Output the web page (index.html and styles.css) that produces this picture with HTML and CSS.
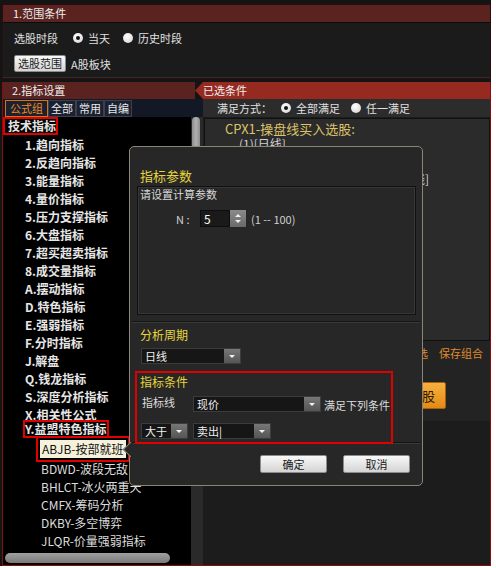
FILE: index.html
```html
<!DOCTYPE html>
<html>
    <head>
        <meta charset="UTF-8">
        <title>条件选股</title>
        <link rel="stylesheet" href="styles.css">
    </head>
    <body>
        <div class="app">

            <!-- 1. range -->
            <div class="range">
                <div class="range-head">1.范围条件</div>
                <div class="range-body">
                    <div class="row">
                        <span class="label">选股时段</span>
                        <span class="radio on"></span><span class="radio-text">当天</span>
                        <span class="radio"></span><span class="radio-text">历史时段</span>
                    </div>
                    <div class="row row-2">
                        <button class="btn-light">选股范围</button>
                        <span class="scope">A股板块</span>
                    </div>
                </div>
            </div>

            <!-- 2. index settings -->
            <div class="index">
                <div class="index-head">
                    <div class="head-l">2.指标设置</div>
                    <div class="head-r">已选条件</div>
                </div>
                <div class="main">
                    <div class="left">
                        <div class="tabs">
                            <span class="tab active">公式组</span>
                            <span class="tab">全部</span>
                            <span class="tab">常用</span>
                            <span class="tab">自编</span>
                        </div>
                        <div class="tree-wrap">
                            <div class="tree">
                                <div class="tree-list">
                                    <div class="t-row t-root"><span class="mark">技术指标</span></div>
                                    <div class="t-row t-item">1.趋向指标</div>
                                    <div class="t-row t-item">2.反趋向指标</div>
                                    <div class="t-row t-item">3.能量指标</div>
                                    <div class="t-row t-item">4.量价指标</div>
                                    <div class="t-row t-item">5.压力支撑指标</div>
                                    <div class="t-row t-item">6.大盘指标</div>
                                    <div class="t-row t-item">7.超买超卖指标</div>
                                    <div class="t-row t-item">8.成交量指标</div>
                                    <div class="t-row t-item">A.摆动指标</div>
                                    <div class="t-row t-item">D.特色指标</div>
                                    <div class="t-row t-item">E.强弱指标</div>
                                    <div class="t-row t-item">F.分时指标</div>
                                    <div class="t-row t-item">J.解盘</div>
                                    <div class="t-row t-item">Q.钱龙指标</div>
                                    <div class="t-row t-item">S.深度分析指标</div>
                                    <div class="t-row t-item">X.相关性公式</div>
                                    <div class="t-row t-item"><span class="mark mark-y">Y.益盟特色指标</span></div>
                                    <div class="t-row t-sub"><span class="picked">ABJB-按部就班</span></div>
                                    <div class="t-row t-sub">BDWD-波段无敌</div>
                                    <div class="t-row t-sub">BHLCT-冰火两重天</div>
                                    <div class="t-row t-sub">CMFX-筹码分析</div>
                                    <div class="t-row t-sub">DKBY-多空博弈</div>
                                    <div class="t-row t-sub">JLQR-价量强弱指标</div>
                                    <div class="t-row t-sub">TQR-价强弱指标</div>
                                </div>
                                <div class="hscroll"><span class="hthumb"></span></div>
                            </div>
                            <div class="vscroll"><span class="vthumb"></span></div>
                        </div>
                    </div>

                    <div class="right">
                        <div class="mode">
                            <span class="mode-label">满足方式：</span>
                            <span class="radio on"></span><span class="radio-text">全部满足</span>
                            <span class="radio"></span><span class="radio-text">任一满足</span>
                        </div>
                        <div class="cond-box">
                            <div class="cond-name">CPX1-操盘线买入选股:</div>
                            <div class="cond-line">(1)[日线]</div>
                            <div class="cond-line cond-line-3">(2)现价大于卖出[日线]</div>
                        </div>
                        <div class="actions">
                            <div class="links"><span>删除所选</span><span>保存组合</span></div>
                            <button class="btn-run">执行选股</button>
                        </div>
                    </div>
                </div>
            </div>

            <!-- popup dialog -->
            <div class="dlg">
                <div class="dlg-title dlg-main">指标参数</div>
                <div class="param">
                    <div class="param-hint">请设置计算参数</div>
                    <div class="param-row">
                        <span class="param-n">N :</span>
                        <span class="num">5</span>
                        <span class="spin"><i class="up"></i><i class="down"></i></span>
                        <span class="range-txt">(1 -- 100)</span>
                    </div>
                </div>
                <div class="sep"></div>
                <div class="dlg-title dlg-sub">分析周期</div>
                <div class="dd dd-period"><span class="dd-text">日线</span><span class="dd-btn"></span></div>
                <div class="cond">
                    <div class="dlg-title cond-title">指标条件</div>
                    <div class="cond-row1">
                        <span class="cond-label">指标线</span>
                        <div class="dd dd-line"><span class="dd-text">现价</span><span class="dd-btn"></span></div>
                        <span class="cond-tail">满足下列条件</span>
                    </div>
                    <div class="cond-row2">
                        <div class="dd dd-op"><span class="dd-text">大于</span><span class="dd-btn"></span></div>
                        <div class="dd dd-sig"><span class="dd-text">卖出|</span><span class="dd-btn"></span></div>
                    </div>
                </div>
                <div class="sep sep-2"></div>
                <div class="dlg-foot">
                    <button class="btn-light btn-dlg">确定</button>
                    <button class="btn-light btn-dlg">取消</button>
                </div>
            </div>

        </div>
    </body>
</html>
```

FILE: styles.css
```css
* {
    box-sizing: border-box;
}

body {
    margin: 0;
    background-color: #ffffff;
    color: #e0e0e0;
    font-family: "Noto Sans CJK SC", sans-serif;
    font-size: 11px;
}

.app {
    position: relative;
    width: 491px;
    height: 566px;
    padding-left: 2px;
    display: flex;
    flex-direction: column;
    background-color: #141414;
}

/* ---------- section 1 ---------- */
.range {
    margin-top: 4px;
    border: 1px solid #2c0c0c;
}

.range-head {
    height: 17px;
    line-height: 17px;
    padding-left: 10px;
    background-color: #5a2320;
    color: #eeeeee;
}

.range-body {
    height: 56px;
    padding: 7px 0 0 11px;
    background-color: #1b1b1b;
    border-top: 1px solid #0c0c0c;
    border-bottom: 1px solid #2e2e2e;
}

.row {
    display: flex;
    align-items: center;
    height: 16px;
}

.row-2 {
    margin-top: 9px;
    height: 17px;
}

.label {
    margin-right: 15px;
}

.radio {
    width: 10px;
    height: 10px;
    border-radius: 50%;
    background: radial-gradient(circle at 40% 35%, #ffffff, #cfcfcf);
    display: inline-flex;
    align-items: center;
    justify-content: center;
}

.radio.on::after {
    content: "";
    width: 4px;
    height: 4px;
    border-radius: 50%;
    background-color: #111111;
}

.radio-text {
    margin: 0 13px 0 5px;
}

.btn-light {
    height: 17px;
    padding: 0 3px;
    border: 1px solid #8c8c8c;
    border-radius: 2px;
    background: linear-gradient(#f8f8f8, #d4d4d4);
    color: #1a1a1a;
    font-family: inherit;
    font-size: 11px;
    line-height: 15px;
}

.scope {
    margin-left: 5px;
}

/* ---------- section 2 ---------- */
.index {
    flex: 1;
    min-height: 0;
    margin-top: 3px;
    display: flex;
    flex-direction: column;
    border: 1px solid #8a0c0c;
    border-top: none;
    overflow: hidden;
}

.index-head {
    height: 17px;
    line-height: 17px;
    display: flex;
    color: #eeeeee;
}

.head-l {
    width: 192px;
    padding-left: 9px;
    background-color: #5a2320;
}

.head-r {
    flex: 1;
    padding-left: 8px;
    background-color: #962a21;
    clip-path: polygon(8px 0, 100% 0, 100% 100%, 8px 100%, 0 50%);
}

.main {
    flex: 1;
    min-height: 0;
    display: flex;
}

.left {
    width: 200px;
    display: flex;
    flex-direction: column;
}

.tabs {
    height: 18px;
    display: flex;
    padding: 1px 0 0 2px;
    background-color: #131826;
}

.tab {
    height: 17px;
    line-height: 15px;
    padding: 0 2px;
    border: 1px solid #3a404c;
    background-color: #1b2131;
    color: #e8e8e8;
}

.tab.active {
    padding: 0 4px;
    border-color: #d27514;
    color: #f08a1e;
}

.tree-wrap {
    flex: 1;
    min-height: 0;
    display: flex;
}

.tree {
    flex: 1;
    display: flex;
    flex-direction: column;
    background-color: #000000;
}

.tree-list {
    flex: 1;
    min-height: 0;
    overflow: hidden;
}

.t-row {
    height: 18px;
    display: flex;
    align-items: center;
    color: #e6e6e6;
    font-size: 12px;
    white-space: nowrap;
}

.t-root {
    padding-left: 2px;
    font-weight: bold;
}

.t-item {
    padding-left: 22px;
    font-weight: bold;
}

.t-sub {
    padding-left: 38px;
    color: #dcdcdc;
}

.mark {
    height: 14px;
    line-height: 14px;
    padding-left: 3px;
    box-shadow: 0 0 0 2px #e00000;
}

.mark-y {
    align-self: flex-start;
    margin-top: -1px;
    padding: 0 1px 0 0;
}

.picked {
    align-self: flex-start;
    height: 18px;
    line-height: 18px;
    margin: -1px 0 0 -1px;
    padding: 0 3px 0 2px;
    background-color: #f6f1da;
    color: #111111;
    box-shadow: 0 0 0 2px #000000, 0 0 0 4px #e00000;
}

.hscroll {
    height: 10px;
    margin: 0 0 2px 2px;
}

.hthumb {
    display: block;
    width: 165px;
    height: 10px;
    border-radius: 5px;
    background: linear-gradient(#a0a0a0, #7a7a7a);
}

.vscroll {
    width: 12px;
    padding-left: 1px;
    background-color: #2a2a2a;
}

.vthumb {
    display: block;
    width: 8px;
    height: 200px;
    border-radius: 4px;
    background: linear-gradient(90deg, #8c8c8c, #b0b0b0, #8c8c8c);
}

.right {
    flex: 1;
    display: flex;
    flex-direction: column;
    background-color: #1c1c1c;
}

.mode {
    height: 18px;
    display: flex;
    align-items: center;
    padding-left: 14px;
    background-color: #2c2c2c;
}

.mode-label {
    margin-right: 9px;
}

.mode .radio-text {
    margin-right: 11px;
}

.cond-box {
    height: 223px;
    margin: 1px 0 0 1px;
    padding: 1px 0 0 20px;
    background-color: #2b2b2b;
    border: 1px solid #111111;
}

.cond-name {
    line-height: 17px;
    color: #dcc36a;
    font-size: 13px;
}

.cond-line {
    line-height: 14px;
    padding-left: 14px;
    color: #cfcfcf;
    font-size: 12px;
}

.cond-line-3 {
    margin-top: 21px;
    padding-right: 60px;
    text-align: right;
    white-space: nowrap;
}

.actions {
    height: 80px;
    background-color: #232323;
}

.links {
    display: flex;
    justify-content: flex-end;
    gap: 11px;
    height: 16px;
    line-height: 16px;
    margin-top: 4px;
    padding-right: 7px;
    color: #e08a2a;
}

.btn-run {
    display: block;
    width: 74px;
    height: 27px;
    margin: 21px 0 0 169px;
    border: 1px solid #a8600e;
    border-radius: 2px;
    background: linear-gradient(#f7b040, #e48a14);
    color: #2a1a00;
    font-family: inherit;
    font-size: 13px;
}

/* ---------- dialog ---------- */
.dlg {
    position: absolute;
    left: 129px;
    top: 146px;
    width: 294px;
    height: 340px;
    padding-top: 20px;
    border: 1px solid #8b8575;
    border-radius: 5px;
    background-color: #272727;
}

.dlg::before {
    content: "";
    position: absolute;
    left: -5px;
    top: 297px;
    width: 10px;
    height: 10px;
    background-color: #272727;
    border-left: 1px solid #8b8575;
    border-bottom: 1px solid #8b8575;
    transform: rotate(45deg);
}

.dlg-title {
    height: 18px;
    line-height: 18px;
    margin-left: 10px;
    color: #e6d53c;
    font-size: 12px;
}

.dlg-main {
    font-size: 13px;
}

.param {
    height: 129px;
    margin: 1px 6px 0 7px;
    border: 1px solid #111111;
    box-shadow: inset 0 0 0 1px #363636;
}

.param-hint {
    line-height: 14px;
    padding-left: 2px;
    color: #d8d8d8;
}

.param-row {
    display: flex;
    align-items: center;
    height: 17px;
    margin-top: 9px;
    padding-left: 38px;
    color: #cfcfcf;
}

.param-n {
    width: 24px;
}

.num {
    width: 30px;
    height: 17px;
    line-height: 15px;
    padding-left: 3px;
    border: 1px solid #0d0d0d;
    background-color: #1a1a1a;
    color: #ffffff;
    font-size: 12px;
}

.spin {
    width: 16px;
    height: 17px;
    display: flex;
    flex-direction: column;
    align-items: center;
    justify-content: space-around;
    padding: 3px 0;
    background: linear-gradient(#8a8a8a, #6a6a6a);
}

.spin i {
    width: 0;
    height: 0;
    border-left: 3px solid transparent;
    border-right: 3px solid transparent;
}

.spin .up {
    border-bottom: 3px solid #f0f0f0;
}

.spin .down {
    border-top: 3px solid #f0f0f0;
}

.range-txt {
    margin-left: 5px;
}

.sep {
    height: 2px;
    margin: 6px 2px 0 2px;
    border-top: 1px solid #151515;
    border-bottom: 1px solid #3a3a3a;
}

.dlg-sub {
    margin-top: 3px;
}

.dd {
    height: 16px;
    display: flex;
    border: 1px solid #3c3c3c;
    background-color: #161616;
}

.dd-text {
    flex: 1;
    padding-left: 3px;
    line-height: 14px;
    color: #eeeeee;
    white-space: nowrap;
}

.dd-btn {
    width: 16px;
    display: flex;
    align-items: center;
    justify-content: center;
    background: linear-gradient(#777777, #555555);
}

.dd-btn::after {
    content: "";
    border-left: 3px solid transparent;
    border-right: 3px solid transparent;
    border-top: 3px solid #f4f4f4;
}

.dd-period {
    width: 100px;
    margin: 4px 0 0 11px;
}

.cond {
    width: 258px;
    height: 73px;
    margin: 7px 0 0 5px;
    padding-left: 3px;
    border: 2px solid #e00000;
    position: relative;
    z-index: 1;
}

.cond-title {
    margin: 0;
}

.cond-row1 {
    display: flex;
    height: 16px;
    margin-top: 5px;
}

.cond-label {
    width: 53px;
    padding-left: 2px;
    line-height: 12px;
    color: #dcdcdc;
}

.dd-line {
    width: 128px;
}

.cond-tail {
    margin-left: 3px;
    line-height: 18px;
    color: #dcdcdc;
    white-space: nowrap;
}

.cond-row2 {
    display: flex;
    gap: 5px;
    margin-top: 11px;
    padding-left: 1px;
}

.dd-op {
    width: 47px;
}

.dd-sig {
    width: 78px;
}

.sep-2 {
    margin-top: -2px;
}

.dlg-foot {
    display: flex;
    justify-content: flex-end;
    gap: 16px;
    margin-top: 11px;
    padding-right: 12px;
}

.btn-dlg {
    width: 67px;
    height: 18px;
}
```
